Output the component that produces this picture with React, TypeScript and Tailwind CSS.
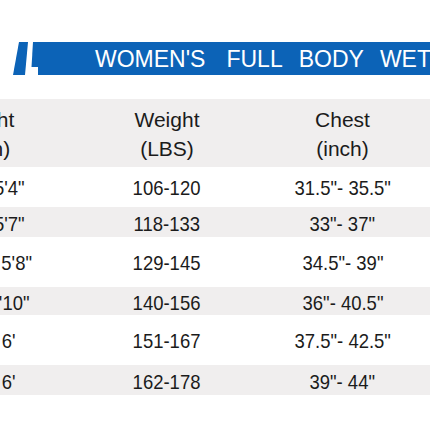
import React from "react";

const rows = [
  { h: "5'1\"- 5'4\"", w: "106-120", c: "31.5\"- 35.5\"", gray: false, hgt: "h-[40px]" },
  { h: "5'3\"- 5'7\"", w: "118-133", c: "33\"- 37\"", gray: true, hgt: "h-[30px]" },
  { h: "5'4.5\"- 5'8\"", w: "129-145", c: "34.5\"- 39\"", gray: false, hgt: "h-[50px]" },
  { h: "5'7\"- 5'10\"", w: "140-156", c: "36\"- 40.5\"", gray: true, hgt: "h-[28px]" },
  { h: "5'8\"- 6'", w: "151-167", c: "37.5\"- 42.5\"", gray: false, hgt: "h-[50px]" },
  { h: "5'9\"- 6'", w: "162-178", c: "39\"- 44\"", gray: true, hgt: "h-[30px]" },
];

function Cell({ children }: { children: React.ReactNode }) {
  return (
    <div className="flex items-center justify-center whitespace-nowrap">
      <span className="inline-block scale-x-[0.88]">{children}</span>
    </div>
  );
}

export default function App() {
  return (
    <div
      className="w-[430px] h-[430px] bg-white overflow-hidden text-[#1b1b1b]"
      style={{ fontFamily: '"Liberation Sans", Arial, sans-serif' }}
    >
      {/* Title banner */}
      <div className="mt-[42px] h-[33px] flex">
        <svg width="38" height="33" viewBox="0 0 38 33" className="shrink-0">
          <polygon points="19,0 28,0 25,33 13,33" fill="#0c63b7" />
          <polygon points="33,0 38,0 38,25 31.5,25" fill="#0c63b7" />
        </svg>
        <div className="flex-1 bg-[#0c63b7] flex items-center pl-[57px] pt-[2px] text-white text-[23px] leading-none whitespace-nowrap">
          <span>WOMEN'S</span>
          <span className="ml-[21px]">FULL</span>
          <span className="ml-[16px]">BODY</span>
          <span className="ml-[16px]">WETSUIT</span>
        </div>
      </div>

      {/* Size table */}
      <div className="mt-[24px] -ml-[80px] w-[510px]">
        <div className="grid grid-cols-[136px_222px_129px_1fr] bg-[#f0eeee] h-[68px] pt-[6px] text-[21px] leading-[29px]">
          <div className="flex flex-col items-center whitespace-nowrap -translate-x-[4px]">
            <span>Height</span>
            <span>(inch)</span>
          </div>
          <div className="flex flex-col items-center whitespace-nowrap">
            <span>Weight</span>
            <span>(LBS)</span>
          </div>
          <div className="flex flex-col items-center whitespace-nowrap">
            <span>Chest</span>
            <span>(inch)</span>
          </div>
          <div />
        </div>
        {rows.map((r, i) => (
          <div
            key={i}
            className={`grid grid-cols-[136px_222px_129px_1fr] text-[21px] leading-none ${r.hgt} ${
              r.gray ? "bg-[#f0eeee] pt-[3px]" : "bg-white"
            }`}
          >
            <Cell>{r.h}</Cell>
            <Cell>{r.w}</Cell>
            <Cell>{r.c}</Cell>
            <div />
          </div>
        ))}
      </div>
    </div>
  );
}
